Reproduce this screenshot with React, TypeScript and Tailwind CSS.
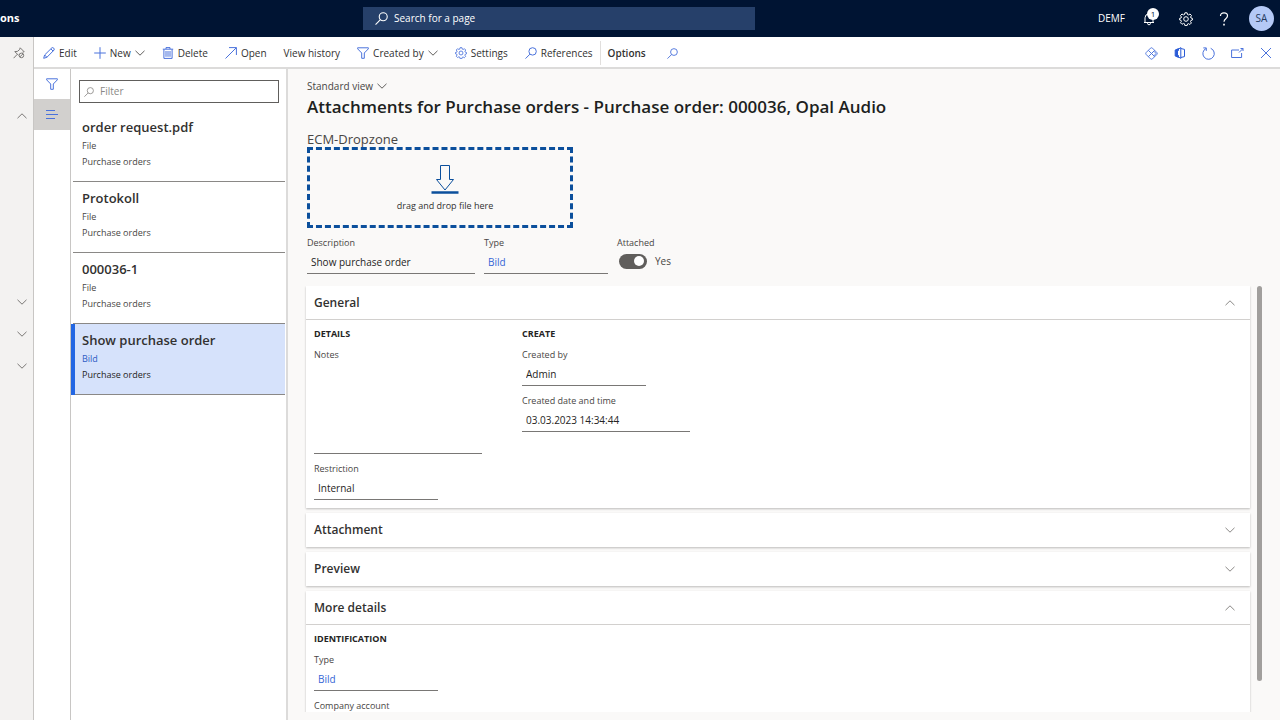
import { useState, type ReactNode } from "react";
import clsx from "clsx";

/* ---------- Icons ---------- */

interface IconProps {
  children: ReactNode;
  className?: string;
  box?: string;
}

function Icon({ children, className = "size-3 text-[#4a72dc]", box = "0 0 12 12" }: IconProps) {
  return (
    <svg
      viewBox={box}
      className={clsx("shrink-0", className)}
      fill="none"
      stroke="currentColor"
      strokeWidth="1"
      aria-hidden="true"
    >
      {children}
    </svg>
  );
}

function Chevron({ up = false, className = "text-[#605e5c]" }: { up?: boolean; className?: string }) {
  return (
    <Icon box="0 0 10 6" className={clsx("w-2.5 h-1.5", className)}>
      <path d={up ? "M.5 5.2 5 .8l4.5 4.4" : "M.5.8 5 5.2 9.5.8"} />
    </Icon>
  );
}

function SearchIcon({ className }: { className?: string }) {
  return (
    <Icon className={className}>
      <circle cx="7.6" cy="4.4" r="3.7" />
      <path d="M5 7.1.5 11.6" />
    </Icon>
  );
}

function GearIcon({ className }: { className?: string }) {
  return (
    <Icon box="0 0 14 14" className={className}>
      <path d="M5.9.8h2.2l.4 1.7 1 .4 1.5-.9 1.5 1.5-.9 1.5.4 1 1.4.4v1.6l-1.6.6-.3.9.9 1.5-1.5 1.5-1.5-.9-.9.4-.4 1.6H5.9l-.4-1.800-1-.4-1.500.9-1.500-1.500.9-1.500-.3-.9-1.500-.500V6.400l1.500-.4.3-1-.9-1.500L3 2l1.500.9 1-.4z" />
      <circle cx="7" cy="7" r="2.3" />
    </Icon>
  );
}

function FunnelIcon({ className }: { className?: string }) {
  return (
    <Icon className={className}>
      <path d="M.6.8h10.8v1L7.3 6v5.3H4.7V6L.6 1.8z" />
    </Icon>
  );
}

function EditIcon() {
  return (
    <Icon>
      <path d="M.7 11.3 1.6 8 8.9.8q1-.6 1.8.3t.4 1.9L3.9 10.3zM7.9 1.9l2.2 2.2M1.7 8l2.2 2.3" />
    </Icon>
  );
}

function TrashIcon() {
  return (
    <Icon>
      <path d="M.8 2.2h10.4M4 2V.6h4V2M1.9 2.4v9h8.2v-9M4 4v5.8M6 4v5.8M8 4v5.8" />
    </Icon>
  );
}

function PinIcon() {
  return (
    <Icon className="size-3 text-[#797775]">
      <path d="M7.2.8 11.2 4.8 9.5 5.2M7.2.8 6.6 2.6 4.4 4.4 1.8 4.6 4.4 7.2 5.6 8.4M4.4 7.2.6 11.2" />
      <circle cx="8.4" cy="8.4" r="2.3" />
      <path d="m6.9 9.9 3-3" />
    </Icon>
  );
}

/* ---------- Header ---------- */

function TopBar() {
  return (
    <header className="flex h-[37px] shrink-0 items-center bg-[#001433] text-white">
      <div className="w-[363px] shrink-0 text-[11px] font-bold">ons</div>
      <label className="flex h-[23px] w-[392px] items-center gap-1.5 bg-[#26406a] pl-3">
        <SearchIcon className="size-[13px] text-white" />
        <input
          type="search"
          aria-label="Search for a page"
          placeholder="Search for a page"
          className="w-full bg-transparent text-[10px] text-white outline-none placeholder:text-white"
        />
      </label>
      <div className="ml-auto flex items-center pr-1.5">
        <button className="mr-[18px] text-[10px]">DEMF</button>
        <button aria-label="Notifications" className="relative mr-4 flex size-5 items-center">
          <Icon box="0 0 12 14" className="h-3.5 w-3">
            <path d="M1 10.5h10M2 10.5V5.8Q2 2 6 2t4 3.8v4.7M4.5 11.2q0 1.6 1.5 1.6t1.5-1.6" />
          </Icon>
          <span className="absolute -top-px left-1 flex size-3 items-center justify-center rounded-full bg-white text-[8px] text-[#001433]">
            1
          </span>
        </button>
        <button aria-label="Settings" className="mr-[26px]">
          <GearIcon className="size-3.5 text-white" />
        </button>
        <button aria-label="Help" className="mr-5">
          <Icon box="0 0 10 14" className="h-3.5 w-2.5">
            <path strokeWidth="1.2" d="M1.5 4Q1.5.8 5 .8t3.5 3q0 1.6-1.7 2.9T5 9.8" />
            <path strokeWidth="1.6" d="M5 11.8v1.7" />
          </Icon>
        </button>
        <button className="size-[25px] rounded-full bg-[#b4c9f6] text-[10px] text-[#243a5e]">SA</button>
      </div>
    </header>
  );
}

/* ---------- Action bar ---------- */

interface ActionProps {
  label: string;
  icon?: ReactNode;
  menu?: boolean;
}

function Action({ label, icon, menu = false }: ActionProps) {
  return (
    <button className="flex items-center gap-1 whitespace-nowrap">
      {icon}
      {label}
      {menu && <Chevron />}
    </button>
  );
}

function ActionBar() {
  return (
    <div className="flex h-8 shrink-0 items-center justify-between border-b-2 border-[#dcdbda] bg-white pt-0.5 pr-2 pl-[9px] text-[10px] text-[#323130]">
      <div className="flex h-full items-center gap-[17px]">
        <Action label="Edit" icon={<EditIcon />} />
        <Action label="New" icon={<Icon><path d="M6 .2v11.6M.2 6h11.6" /></Icon>} menu />
        <Action label="Delete" icon={<TrashIcon />} />
        <Action label="Open" icon={<Icon><path d="M.5 11.5 11.3.7M4 .6h7.4V8" /></Icon>} />
        <Action label="View history" />
        <Action label="Created by" icon={<FunnelIcon />} menu />
        <Action label="Settings" icon={<GearIcon className="size-3 text-[#4a72dc]" />} />
        <Action label="References" icon={<SearchIcon />} />
        <div className="-mx-2.5 h-6 w-px bg-[#e1dfdd]" />
        <button className="font-semibold">Options</button>
        <button aria-label="Search actions" className="ml-1">
          <SearchIcon className="size-[11px] text-[#4a72dc]" />
        </button>
      </div>
      <div className="flex items-center gap-4">
        <button aria-label="Personalize">
          <Icon box="0 0 14 14" className="size-[13px] text-[#4a72dc]">
            <path d="M6 1.2q1-.8 2 0l4.800 4.800q.8 1 0 2L8 12.800q-1 .8-2 0L1.200 8q-.8-1 0-2z" />
            <path d="M3.600 3.600 7 7l3.400-3.400M7 7l-3.400 3.400M7 7l3.400 3.400M7 7l2.500-2.500L12 7 9.500 9.500z" />
          </Icon>
        </button>
        <button aria-label="Open in Microsoft Office">
          <Icon className="size-3 text-[#2a5bd7]">
            <path d="M6.8.6v10.8M6.8 1.5l3.7.9v7.2l-3.7.9M3 9l3.800 2.400M3 3 6.800.6" />
            <path fill="currentColor" d="M1.2 3 4.500 1.600v1.800L3.500 4v4l1 .6v1.800L1.200 9z" />
          </Icon>
        </button>
        <button aria-label="Refresh">
          <Icon box="0 0 13 13" className="size-[13px] text-[#4a72dc]">
            <path d="M8.7 1.3a5.7 5.7 0 1 1-4.7.2M1.3.9h3v3" />
          </Icon>
        </button>
        <button aria-label="Open in new window">
          <Icon box="0 0 13 12" className="h-3 w-[13px] text-[#4a72dc]">
            <path d="M8 3H.6v7.5h10V6M8 5.5 12 1.5M9.5 1.500h2.500v2.500" />
          </Icon>
        </button>
        <button aria-label="Close">
          <Icon><path d="m1 1 10 10M11 1 1 11" /></Icon>
        </button>
      </div>
    </div>
  );
}

/* ---------- Left side ---------- */

function NavRail() {
  return (
    <nav className="flex w-[34px] shrink-0 flex-col border-r border-[#c8c6c4] bg-[#f3f2f1] pl-2.5">
      <button aria-label="Pin navigation" className="flex h-8 w-6 items-center pl-[3px]">
        <PinIcon />
      </button>
      <button aria-label="Collapse group" className="mt-[31px] flex h-8 w-6 items-center justify-center">
        <Chevron up className="text-[#797775]" />
      </button>
      <div className="mt-[154px]">
        {["Recent", "Workspaces", "Modules"].map((group) => (
          <button key={group} aria-label={group} className="flex h-8 w-6 items-center justify-center">
            <Chevron className="text-[#797775]" />
          </button>
        ))}
      </div>
    </nav>
  );
}

const attachments = [
  { title: "order request.pdf", type: "File" },
  { title: "Protokoll", type: "File" },
  { title: "000036-1", type: "File" },
  { title: "Show purchase order", type: "Bild" },
];

function AttachmentList() {
  const [selected, setSelected] = useState(3);

  return (
    <aside className="w-[217px] shrink-0 border-r-2 border-[#dcdbda] bg-white">
      <label className="mx-2 mt-[11px] mb-2 flex h-[23px] w-[200px] items-center gap-1.5 border border-[#605e5c] pl-1">
        <SearchIcon className="size-2.5 text-[#8a8886]" />
        <input
          aria-label="Filter"
          placeholder="Filter"
          className="w-full text-[10px] outline-none placeholder:text-[#8a8886]"
        />
      </label>
      <ul className="pr-px">
        {attachments.map((item, i) => (
          <li
            key={item.title}
            className={clsx(i === selected ? "border-l-4 border-[#2266e3] bg-[#d6e2fb]" : "pl-0.5")}
          >
            <button
              onClick={() => setSelected(i)}
              className={clsx(
                "flex h-[71px] w-full flex-col border-b border-[#8a8886] pt-1.5 text-left text-[9px] leading-4 text-[#484644]",
                i === selected ? "pl-[7px]" : "pl-[9px]",
              )}
            >
              <span className="mb-px text-[13px] leading-5 font-semibold text-[#323130]">{item.title}</span>
              <span className={clsx(item.type === "Bild" && "text-[#2f5bc4]")}>{item.type}</span>
              <span className={clsx(i === selected && "text-[#252423]")}>Purchase orders</span>
            </button>
          </li>
        ))}
      </ul>
    </aside>
  );
}

/* ---------- Form parts ---------- */

interface FieldProps {
  id: string;
  label: string;
  value?: string;
  wide?: boolean;
  link?: boolean;
}

function Field({ id, label, value = "", wide = false, link = false }: FieldProps) {
  return (
    <div className={clsx("flex flex-col", wide ? "w-[168px]" : "w-[124px]")}>
      <label htmlFor={id} className="text-[9px] leading-4 text-[#484644]">
        {label}
      </label>
      <input
        id={id}
        readOnly
        defaultValue={value}
        className={clsx(
          "h-[23px] w-full border-b border-[#797775] bg-transparent px-1 text-[10px] outline-none",
          link ? "text-[#3566d6]" : "text-[#252423]",
        )}
      />
    </div>
  );
}

interface SectionProps {
  title: string;
  open?: boolean;
  children?: ReactNode;
}

function Section({ title, open = false, children }: SectionProps) {
  return (
    <section className="mb-[5px] bg-white shadow-[0_1px_2px_rgba(0,0,0,0.25)]">
      <h2>
        <button
          aria-expanded={open}
          className={clsx(
            "flex h-[34px] w-full items-center justify-between px-2 pr-[15px] text-[12px] font-semibold text-[#323130]",
            open && "border-b border-[#d2d0ce]",
          )}
        >
          {title}
          <Chevron up={open} className="text-[#8a8886]" />
        </button>
      </h2>
      {open && <div className="flex gap-10 px-2 pt-1 pb-2">{children}</div>}
    </section>
  );
}

function Group({ title, children }: { title: string; children: ReactNode }) {
  return (
    <div className="flex min-w-[168px] flex-col gap-[7px]">
      <h3 className="-mb-1 text-[9px] leading-5 font-bold text-[#252423]">{title}</h3>
      {children}
    </div>
  );
}

function AttachmentForm() {
  return (
    <main className="flex min-w-0 flex-1 flex-col bg-[#faf9f8] pt-[9px]">
      <div className="pl-[19px]">
        <button className="flex h-4 items-center gap-1 text-[10px] text-[#484644]">
          Standard view <Chevron />
        </button>
        <h1 className="text-[17px] leading-[26px] font-semibold text-[#201f1e]">
          Attachments for Purchase orders - Purchase order: 000036, Opal Audio
        </h1>
        <p className="mt-[11px] text-[13px] leading-4 text-[#484644]">ECM-Dropzone</p>
        <button className="flex h-[81px] w-[266px] flex-col items-center border-3 border-dashed border-[#0b4f9c] pt-3.5 pl-2.5 text-[9px] text-[#323130]">
          <Icon box="0 0 28 30" className="h-[30px] w-7 text-[#0b4f9c]">
            <path d="M9.5 1.5h9v14h4L14 26 5.5 15.5h4z" />
            <path strokeWidth="2.5" d="M.5 28.5h27" />
          </Icon>
          <span className="mt-1 leading-4">drag and drop file here</span>
        </button>
        <div className="mt-[7px] flex gap-[9px]">
          <Field id="description" label="Description" value="Show purchase order" wide />
          <Field id="type" label="Type" value="Bild" link />
          <div className="text-[9px] leading-4 text-[#484644]">
            <label htmlFor="attached">Attached</label>
            <div className="mt-0.5 flex items-center gap-2 pl-0.5">
              <input
                id="attached"
                type="checkbox"
                role="switch"
                defaultChecked
                className="flex h-[15px] w-7 appearance-none items-center rounded-full bg-[#605e5c] px-[3px] before:size-2.5 before:rounded-full before:bg-white checked:justify-end"
              />
              <span className="text-[10px]">Yes</span>
            </div>
          </div>
        </div>
      </div>

      <div className="mt-3 mb-2 flex min-h-0 flex-1 pr-[18px]">
        <div className="min-w-0 flex-1 overflow-hidden pr-[7px] pl-[18px]">
          <Section title="General" open>
            <Group title="DETAILS">
              <div className="flex w-[168px] flex-col">
                <label htmlFor="notes" className="text-[9px] leading-4 text-[#484644]">
                  Notes
                </label>
                <textarea
                  id="notes"
                  readOnly
                  className="h-[91px] resize-none border-b border-[#797775] px-1 text-[10px] outline-none"
                />
              </div>
              <div className="flex w-[124px] flex-col">
                <label htmlFor="restriction" className="text-[9px] leading-4 text-[#484644]">
                  Restriction
                </label>
                <select
                  id="restriction"
                  className="h-[23px] appearance-none border-b border-[#797775] px-1 text-[10px] text-[#252423] outline-none"
                >
                  <option>Internal</option>
                </select>
              </div>
            </Group>
            <Group title="CREATE">
              <Field id="created-by" label="Created by" value="Admin" />
              <Field id="created-at" label="Created date and time" value="03.03.2023 14:34:44" wide />
            </Group>
          </Section>
          <Section title="Attachment" />
          <Section title="Preview" />
          <Section title="More details" open>
            <Group title="IDENTIFICATION">
              <Field id="more-type" label="Type" value="Bild" link />
              <Field id="company" label="Company account" />
            </Group>
          </Section>
        </div>
        {/* Scroll position */}
        <div className="h-[395px] w-[5px] rounded-full bg-[#a19f9d]" />
      </div>
    </main>
  );
}

export default function App() {
  return (
    <div className="flex h-screen flex-col overflow-hidden font-['Open_Sans',sans-serif]">
      <TopBar />
      <div className="flex min-h-0 flex-1">
        <NavRail />
        <div className="flex min-w-0 flex-1 flex-col">
          <ActionBar />
          <div className="flex min-h-0 flex-1">
            <div className="flex w-[37px] shrink-0 flex-col border-r border-[#c8c6c4] bg-white">
              <button aria-label="Show filters" className="flex h-[30px] items-center justify-center">
                <FunnelIcon className="size-3 text-[#4a72dc]" />
              </button>
              <button aria-label="Show list" className="flex h-[31px] items-center justify-center bg-[#d2d0ce]">
                <Icon><path d="M0 1.5h9M0 5.5h12M0 9.5h9" /></Icon>
              </button>
            </div>
            <AttachmentList />
            <AttachmentForm />
          </div>
        </div>
      </div>
    </div>
  );
}
